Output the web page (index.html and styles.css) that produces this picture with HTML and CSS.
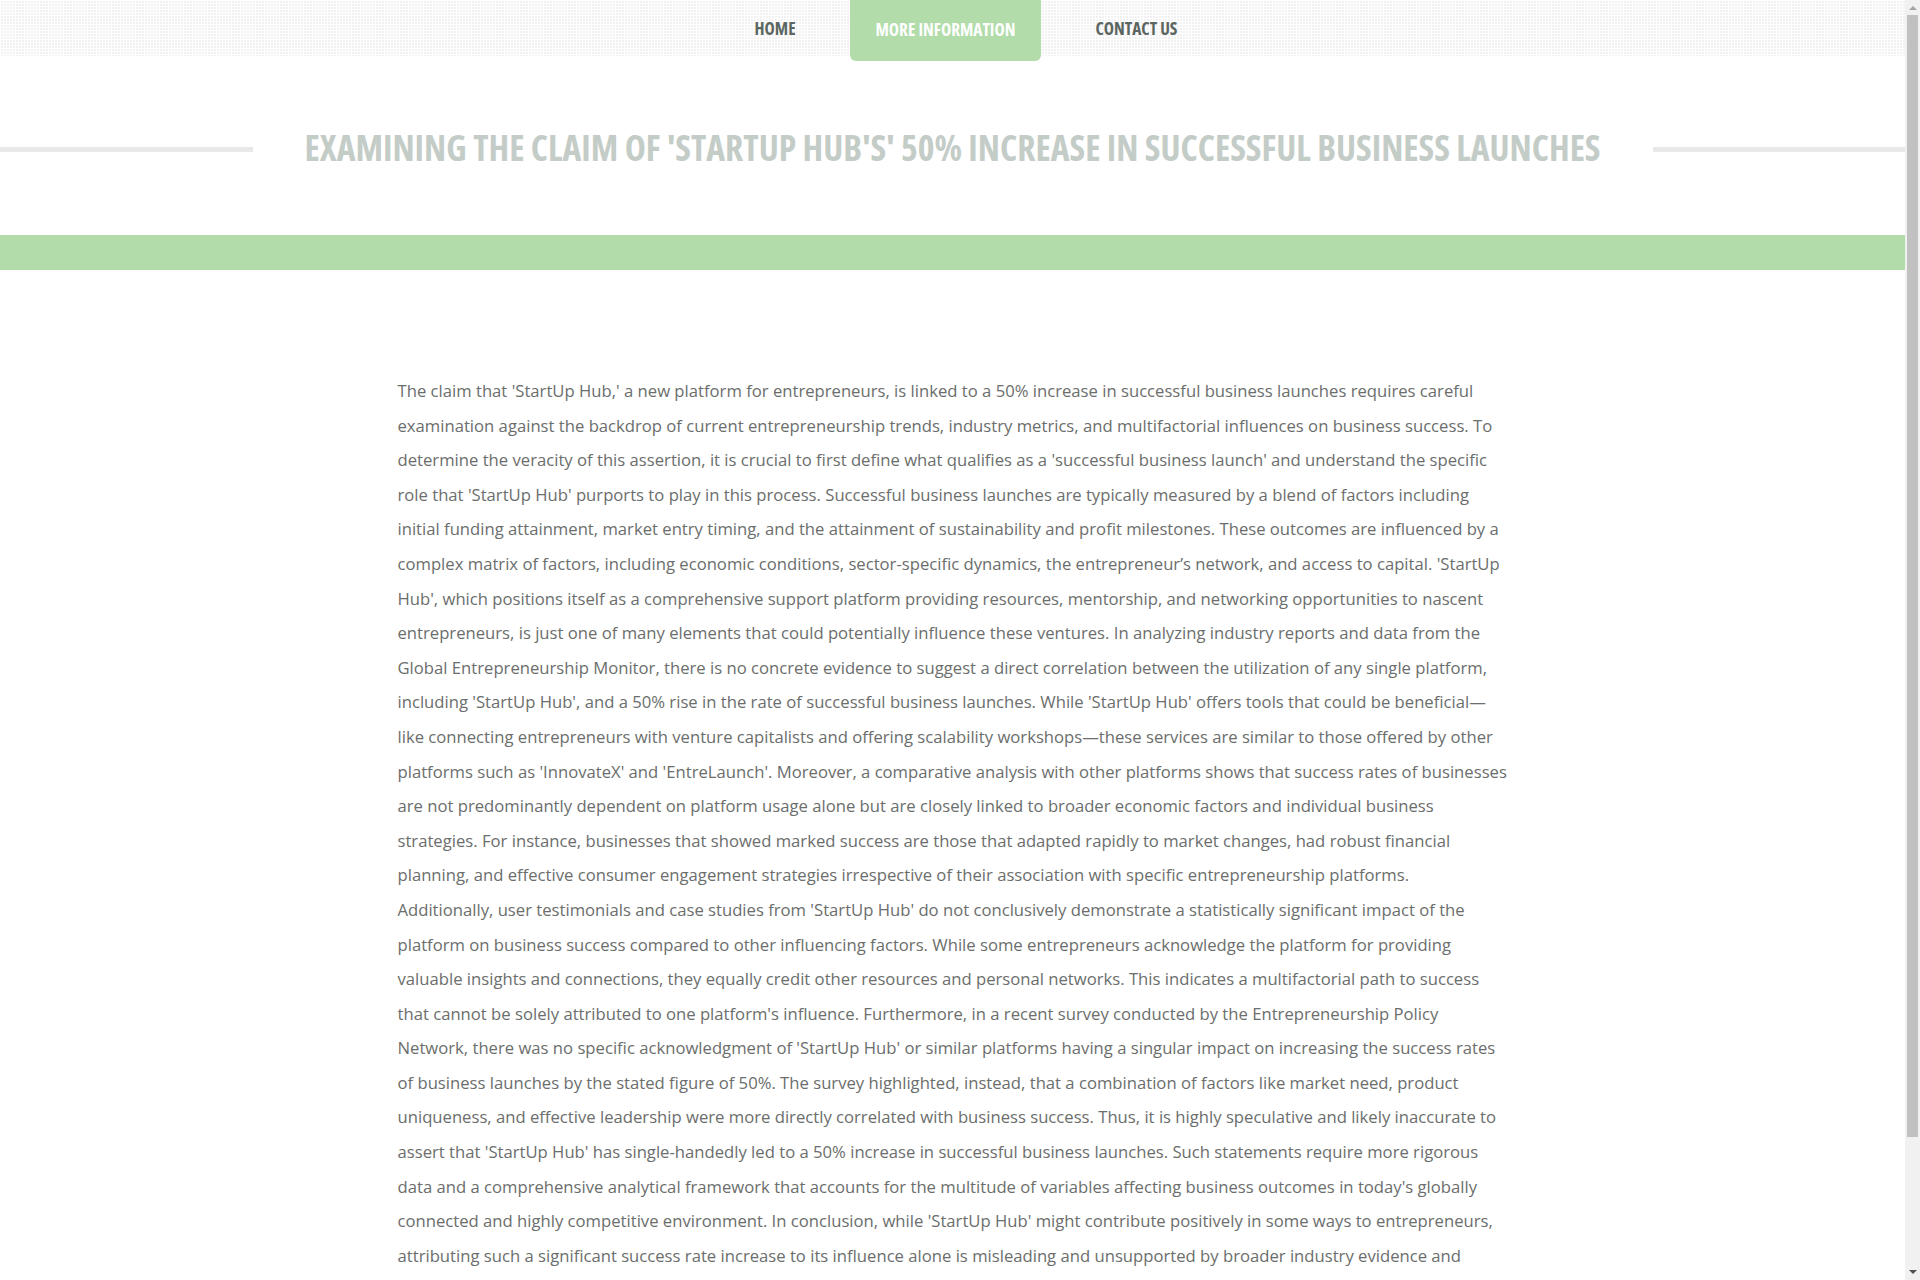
FILE: index.html
```html
<!DOCTYPE html>
<html lang="en">
<head>
<meta charset="utf-8">
<title>Examining the claim of 'StartUp Hub's' 50% increase</title>
<link rel="stylesheet" href="styles.css">
</head>
<body>
<div class="page">
  <header class="topbar">
    <nav class="menu">
      <a class="menu-item" href="#">HOME</a>
      <a class="menu-item active" href="#">MORE INFORMATION</a>
      <a class="menu-item" href="#">CONTACT US</a>
    </nav>
  </header>
  <div class="title-row">
    <span class="rule"></span>
    <h1 class="title">EXAMINING THE CLAIM OF 'STARTUP HUB'S' 50% INCREASE IN SUCCESSFUL BUSINESS LAUNCHES</h1>
    <span class="rule"></span>
  </div>
  <div class="band"></div>
  <main class="content">
    <p>The claim that 'StartUp Hub,' a new platform for entrepreneurs, is linked to a 50% increase in successful business launches requires careful examination against the backdrop of current entrepreneurship trends, industry metrics, and multifactorial influences on business success. To determine the veracity of this assertion, it is crucial to first define what qualifies as a 'successful business launch' and understand the specific role that 'StartUp Hub' purports to play in this process. Successful business launches are typically measured by a blend of factors including initial funding attainment, market entry timing, and the attainment of sustainability and profit milestones. These outcomes are influenced by a complex matrix of factors, including economic conditions, sector-specific dynamics, the entrepreneur’s network, and access to capital. 'StartUp Hub', which positions itself as a comprehensive support platform providing resources, mentorship, and networking opportunities to nascent entrepreneurs, is just one of many elements that could potentially influence these ventures. In analyzing industry reports and data from the Global Entrepreneurship Monitor, there is no concrete evidence to suggest a direct correlation between the utilization of any single platform, including 'StartUp Hub', and a 50% rise in the rate of successful business launches. While 'StartUp Hub' offers tools that could be beneficial—like connecting entrepreneurs with venture capitalists and offering scalability workshops—these services are similar to those offered by other platforms such as 'InnovateX' and 'EntreLaunch'. Moreover, a comparative analysis with other platforms shows that success rates of businesses are not predominantly dependent on platform usage alone but are closely linked to broader economic factors and individual business strategies. For instance, businesses that showed marked success are those that adapted rapidly to market changes, had robust financial planning, and effective consumer engagement strategies irrespective of their association with specific entrepreneurship platforms. Additionally, user testimonials and case studies from 'StartUp Hub' do not conclusively demonstrate a statistically significant impact of the platform on business success compared to other influencing factors. While some entrepreneurs acknowledge the platform for providing valuable insights and connections, they equally credit other resources and personal networks. This indicates a multifactorial path to success that cannot be solely attributed to one platform's influence. Furthermore, in a recent survey conducted by the Entrepreneurship Policy Network, there was no specific acknowledgment of 'StartUp Hub' or similar platforms having a singular impact on increasing the success rates of business launches by the stated figure of 50%. The survey highlighted, instead, that a combination of factors like market need, product uniqueness, and effective leadership were more directly correlated with business success. Thus, it is highly speculative and likely inaccurate to assert that 'StartUp Hub' has single-handedly led to a 50% increase in successful business launches. Such statements require more rigorous data and a comprehensive analytical framework that accounts for the multitude of variables affecting business outcomes in today's globally connected and highly competitive environment. In conclusion, while 'StartUp Hub' might contribute positively in some ways to entrepreneurs, attributing such a significant success rate increase to its influence alone is misleading and unsupported by broader industry evidence and comprehensive market data.</p>
  </main>
</div>
<div class="scrollbar" aria-hidden="true">
  <span class="arrow up"></span>
  <span class="thumb"></span>
  <span class="arrow down"></span>
</div>
</body>
</html>
```
FILE: styles.css
```css
html, body {
  margin: 0;
  padding: 0;
  background: #ffffff;
}

body {
  font-family: "Open Sans", "Liberation Sans", sans-serif;
}

.page {
  width: calc(100% - 15px);
}

.topbar {
  height: 56px;
  background-color: #f1f1f1;
  background-image:
    linear-gradient(90deg, #ffffff 1px, transparent 1px),
    linear-gradient(#ffffff 1px, transparent 1px);
  background-size: 3px 3px;
}

.menu {
  display: flex;
  justify-content: center;
  gap: 28px;
  padding-left: 27px;
}

.menu-item {
  display: flex;
  align-items: center;
  box-sizing: border-box;
  height: 56px;
  padding: 1px 26px 0;
  font-family: "Open Sans", "Liberation Sans Narrow", sans-serif;
  font-stretch: 75%;
  font-weight: 700;
  font-size: 17.3px;
  color: #5c6661;
  text-decoration: none;
  border-radius: 0 0 6px 6px;
}

.menu-item.active {
  height: 61px;
  padding-bottom: 4px;
  background: #b2dcaa;
  color: #ffffff;
}

.title-row {
  display: flex;
  align-items: center;
  margin-top: 68px;
  height: 46px;
}

.rule {
  flex: 1;
  height: 5px;
  margin-top: 5px;
  background: #e8e9e8;
}

.title {
  margin: 0 52px;
  font-family: "Open Sans", "Liberation Sans Narrow", sans-serif;
  font-stretch: 75%;
  font-weight: 700;
  font-size: 35.7px;
  line-height: 46px;
  color: #c4ccc7;
  white-space: nowrap;
}

.band {
  margin-top: 65px;
  height: 35px;
  background: #b2dcaa;
}

.content {
  width: 1110px;
  margin: 0 auto;
  padding-top: 104px;
  padding-bottom: 60px;
}

.content p {
  margin: 0;
  font-size: 16.66px;
  line-height: 34.6px;
  color: #6b6e6c;
}

.scrollbar {
  position: fixed;
  top: 0;
  right: 0;
  width: 15px;
  height: 100vh;
  background: #f1f1f1;
  display: flex;
  flex-direction: column;
  align-items: center;
}

.arrow {
  width: 0;
  height: 0;
  border-left: 4px solid transparent;
  border-right: 4px solid transparent;
}

.arrow.up {
  margin-top: 6px;
  border-bottom: 4px solid #a3a3a3;
}

.arrow.down {
  margin-top: auto;
  margin-bottom: 6px;
  border-top: 4px solid #505050;
}

.thumb {
  margin-top: 5px;
  width: 11px;
  height: 1122px;
  background: #c1c1c1;
}
```
